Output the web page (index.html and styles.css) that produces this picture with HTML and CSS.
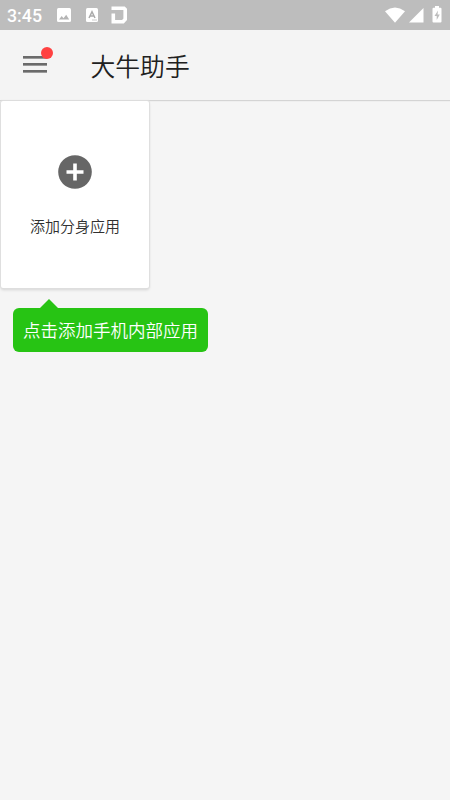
FILE: index.html
```html
<!DOCTYPE html>
<html lang="zh-CN">
<head>
<meta charset="utf-8">
<title>大牛助手</title>
<link rel="stylesheet" href="styles.css">
</head>
<body>
<div class="status">
  <span class="time">3:45</span>
  <svg class="picture" width="14" height="14" viewBox="0 0 14 14"><rect width="14" height="14" rx="1.5" fill="#fff"/><path d="M2 11.500 4.700 8l1.800 2.200L9.200 6.800l3 4.700z" fill="#b5b5b5"/></svg>
  <svg class="letter" width="12" height="14" viewBox="0 0 12 14"><rect width="12" height="14" rx="1.5" fill="#fff"/><path d="M3 10 6 3.700 9 10M4.100 8h3.800" fill="none" stroke="#aaa" stroke-width="1.500"/><path d="M6 12h5" stroke="#ccc"/></svg>
  <svg class="brand" width="17" height="18" viewBox="0 0 17 18"><path d="M.5 2.200H13L14.200 3.400V13.200L12 15.700H2.300V7.500" fill="none" stroke="#fff" stroke-width="3.600"/></svg>
  <span class="spacer"></span>
  <svg class="wifi" width="20" height="16" viewBox="0 0 20 16"><path d="M0 4.200Q10-3.200 20 4.200L10 15.800z" fill="#fff"/></svg>
  <svg class="signal" width="15" height="15" viewBox="0 0 15 15"><path d="M14.500 0v14.500H0z" fill="#fff"/></svg>
  <svg class="battery" width="10" height="17" viewBox="0 0 10 17"><path d="M3 0h4v1.800h1.500q1 0 1 1V15.500q0 1-1 1h-7q-1 0-1-1V2.800q0-1 1-1H3z" fill="#fff"/><path d="M6 4.500 2.500 10h2.200v4L7.800 8.500H5.500z" fill="#bdbdbd"/></svg>
</div>
<header class="header">
  <div class="menu"><i class="bar"></i><i class="bar"></i><i class="bar"></i><b class="dot"></b></div>
  <h1 class="title">大牛助手</h1>
</header>
<main class="content">
  <div class="card">
    <svg class="add" width="34" height="34" viewBox="0 0 34 34"><circle cx="17" cy="17" r="16.800" fill="#666"/><path d="M17 8.500v17M8.500 17h17" stroke="#fff" stroke-width="3.600"/></svg>
    <span class="label">添加分身应用</span>
  </div>
  <div class="tip">点击添加手机内部应用</div>
</main>
</body>
</html>
```
FILE: styles.css
```css
* { box-sizing: border-box; }
body {
  margin: 0;
  height: 800px;
  overflow: hidden;
  background: #f5f5f5;
  font-family: "Noto Sans CJK SC", sans-serif;
}
svg { display: block; flex: none; }
.status {
  display: flex;
  align-items: flex-start;
  height: 30px;
  padding: 0 8px 0 7px;
  background: #bdbdbd;
}
.time {
  width: 50px;
  color: #fff;
  font: 500 17.800px/32px Roboto, sans-serif;
}
.picture { margin-top: 8px; }
.letter { margin: 8px 0 0 15px; }
.brand { margin: 6px 0 0 13px; }
.spacer { flex: 1; }
.wifi { margin-top: 7px; }
.signal { margin: 8px 8px 0 4px; }
.battery { margin-top: 6px; }
.header {
  display: flex;
  align-items: center;
  height: 70px;
  padding-left: 23px;
  background: #f4f4f4;
  box-shadow: 0 1px 1px #d4d4d4;
}
.menu {
  position: relative;
  display: grid;
  grid-auto-rows: 3px;
  gap: 4px;
  width: 24px;
  margin: -1px 43.500px 0 0;
}
.bar {
  height: 3px;
  border-bottom: 1px solid #9a9a9a;
  background: #6b6b6b;
}
.dot {
  position: absolute;
  top: -9px;
  right: -6px;
  width: 12px;
  height: 12px;
  border-radius: 50%;
  background: #ff4141;
}
.title {
  margin: 0;
  color: #202020;
  font-size: 24.800px;
  font-weight: 350;
  line-height: 70px;
}
.content { padding-top: 1px; }
.card {
  display: flex;
  flex-direction: column;
  align-items: center;
  width: 148px;
  height: 187px;
  margin-left: 1px;
  padding-top: 54px;
  border-radius: 2px;
  background: #fff;
  box-shadow: 0 0 1px 1px #dedede, 0 2px 3px #d4d4d4;
}
.label {
  margin-top: 26px;
  color: #303030;
  font-size: 15px;
  font-weight: 350;
  line-height: 22px;
}
.tip {
  position: relative;
  width: 195px;
  height: 44px;
  margin: 20px 0 0 13px;
  border-radius: 6px;
  background: #27c414;
  color: #fff;
  font-size: 17.500px;
  font-weight: 350;
  line-height: 44px;
  text-align: center;
  white-space: nowrap;
}
.tip::before {
  content: "";
  position: absolute;
  left: 27px;
  top: -9px;
  border: solid transparent;
  border-width: 0 9.500px 9.500px;
  border-bottom-color: #27c414;
}
```
